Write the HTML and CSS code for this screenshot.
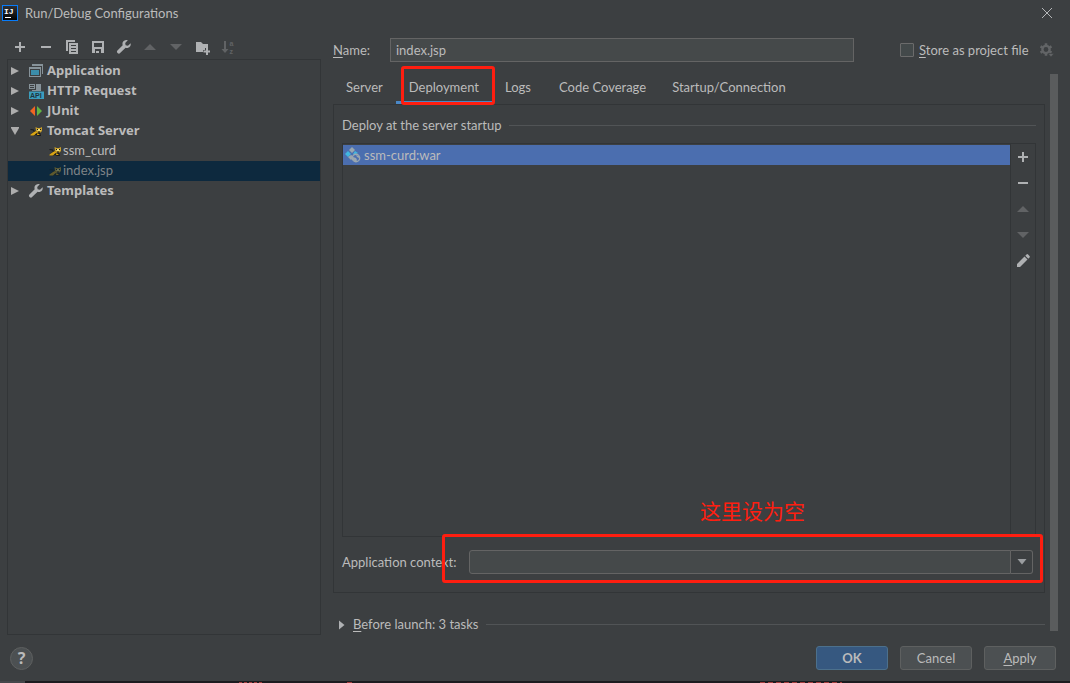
FILE: index.html
```html
<!DOCTYPE html>
<html lang="en">
<head>
<meta charset="utf-8">
<title>Run/Debug Configurations</title>
<link rel="stylesheet" href="styles.css">
</head>
<body>
<div class="dialog">
  <header class="titlebar">
    <svg class="app-logo" width="16" height="16" viewBox="0 0 16 16"><defs><linearGradient id="lg" x2="0" y2="1"><stop offset="0" stop-color="#303236"/><stop offset="1" stop-color="#000"/></linearGradient></defs><rect x=".5" y=".5" width="15" height="15" fill="url(#lg)" stroke="#087cfa"/><text x="2" y="9" class="logo-text">IJ</text><path d="M3 12.500h6" stroke="#fff"/></svg>
    <h1 class="title">Run/Debug Configurations</h1>
    <button class="icon-btn close" aria-label="Close"><svg width="16" height="16" viewBox="0 0 16 16"><path d="M3 3l10 10M13 3L3 13" stroke="#b4b6b8" fill="none"/></svg></button>
  </header>

  <main class="main">
    <section class="sidebar">
      <div class="toolbar">
        <button class="icon-btn" aria-label="Add"><svg width="16" height="16" viewBox="0 0 16 16"><path d="M7 3h2v4h4v2H9v4H7V9H3V7h4z"/></svg></button>
        <button class="icon-btn" aria-label="Remove"><svg width="16" height="16" viewBox="0 0 16 16"><path d="M3 7h10v2H3z"/></svg></button>
        <button class="icon-btn" aria-label="Copy"><svg width="16" height="16" viewBox="0 0 16 16"><path d="M2 1h9v2H4v9H2z"/><path fill-rule="evenodd" d="M5 4h9v11H5zM7 6v1h5V6zM7 9v1h5V9zM7 12v1h5v-1z"/></svg></button>
        <button class="icon-btn" aria-label="Save"><svg width="16" height="16" viewBox="0 0 16 16"><path fill-rule="evenodd" d="M2 2h12v12H2zM4 4v4h8V4zM5 10v4h1v-2h3v2h2v-4z"/></svg></button>
        <button class="icon-btn" aria-label="Edit templates"><svg width="16" height="16" viewBox="0 0 16 16"><path d="M14.600 4.200L12 6.700 9.600 6.300 9.200 4 11.800 1.300C9.600.6 7.300 1.700 6.600 3.600c-.3 1-.2 1.800.1 2.600L1.200 11.800c-.8.8.1 2.200 1 2.700.6.3 1.400.1 1.900-.4l5.500-5.400c2.900 1 5.800-1.400 5-4.500z"/></svg></button>
        <button class="icon-btn dim" aria-label="Move up" disabled><svg width="16" height="16" viewBox="0 0 16 16"><path d="M8 5l6 6H2z"/></svg></button>
        <button class="icon-btn dim" aria-label="Move down" disabled><svg width="16" height="16" viewBox="0 0 16 16"><path d="M2 5h12l-6 6z"/></svg></button>
        <button class="icon-btn" aria-label="New folder"><svg width="16" height="16" viewBox="0 0 16 16"><path d="M2 3h5l2 2h5v4h-3v2H9v2H2z"/><path d="M12 9h2v2.500h2v2h-2V16h-2v-2.500H9.500v-2H12z"/></svg></button>
        <button class="icon-btn dim" aria-label="Sort" disabled><svg width="16" height="16" viewBox="0 0 16 16"><path d="M4 2h2v8h2.500L5 14 1.500 10H4z"/><text x="9.500" y="7" class="sort-text">a</text><text x="9.500" y="14.500" class="sort-text">z</text></svg></button>
      </div>
      <ul class="tree">
        <li class="row group"><svg class="arrow" width="8" height="10" viewBox="0 0 8 10"><path d="M0 1l8 4-8 4z"/></svg><svg width="16" height="16" viewBox="0 0 16 16"><path d="M4 1h11v10h-1V3H4z" fill="#87939a"/><path fill-rule="evenodd" d="M1 4h12v10H1zM2 6v7h10V6z" fill="#87939a"/><path d="M3 7h8v5H3z" fill="#3b8daa"/></svg><span>Application</span></li>
        <li class="row group"><svg class="arrow" width="8" height="10" viewBox="0 0 8 10"><path d="M0 1l8 4-8 4z"/></svg><svg width="16" height="16" viewBox="0 0 16 16"><path fill="#87939a" fill-rule="evenodd" d="M1 1h6v5H1zM2 2v1h4V2zM2 4v1h4V4zM8 1h5v6H8zM4 7h9v1H4z"/><path fill="#3b9dbd" d="M1 8.500h15V16H1z"/><text x="2" y="15" class="api-text">API</text></svg><span>HTTP Request</span></li>
        <li class="row group"><svg class="arrow" width="8" height="10" viewBox="0 0 8 10"><path d="M0 1l8 4-8 4z"/></svg><svg width="16" height="16" viewBox="0 0 16 16"><path d="M7 3v10L2 8z" fill="#f26522"/><path d="M9 3v10l5-5z" fill="#62b543"/></svg><span>JUnit</span></li>
        <li class="row group"><svg class="arrow" width="8" height="10" viewBox="0 0 8 10"><path d="M-.5 1h9L4 9z"/></svg><svg width="16" height="16" viewBox="0 0 16 16"><use href="#tomcat"/></svg><span>Tomcat Server</span></li>
        <li class="row child"><svg width="16" height="16" viewBox="0 0 16 16"><g id="tomcat"><path d="M2.500 6.500l3 .5 1 2L3 12" stroke="#191a1b" stroke-width="1.200" fill="none"/><path d="M4 11l3-3 5 1 1 4h-3l-2-1-3 1z" fill="#191a1b"/><path d="M2.500 11.500L6 9l2-1 2 1.500-2 1-2 2H2.500z" fill="#d9a514"/><path d="M9.500 10l2.500 2h-3z" fill="#d9a514"/><path d="M7.500 4l2 1h2.500l2-1v4l-1.500 1.500h-3L8 8z" fill="#caa02a"/><path d="M9.500 6h3v2h-3z" fill="#f2df79"/><path d="M9 6h1v1H9zM12 6h1v1h-1zM10 8.500h2v1h-2z" fill="#191a1b"/></g></svg><span>ssm_curd</span></li>
        <li class="row child selected"><svg class="faded" width="16" height="16" viewBox="0 0 16 16"><use href="#tomcat"/></svg><span>index.jsp</span></li>
        <li class="row group"><svg class="arrow" width="8" height="10" viewBox="0 0 8 10"><path d="M0 1l8 4-8 4z"/></svg><svg width="16" height="16" viewBox="0 0 16 16"><path fill="#afb1b3" d="M14.600 4.200L12 6.700 9.600 6.300 9.200 4 11.800 1.300C9.600.6 7.300 1.700 6.600 3.600c-.3 1-.2 1.800.1 2.600L1.200 11.800c-.8.8.1 2.200 1 2.700.6.3 1.400.1 1.900-.4l5.500-5.400c2.900 1 5.800-1.400 5-4.500z"/></svg><span>Templates</span></li>
      </ul>
    </section>

    <section class="editor">
      <div class="name-row">
        <label class="name-label" for="name"><u>N</u>ame:</label>
        <input class="field name-input" id="name" type="text" value="index.jsp">
        <input class="check" id="store" type="checkbox">
        <label class="store-label" for="store"><u>S</u>tore as project file</label>
        <button class="icon-btn gear" aria-label="Storage options"><svg width="16" height="16" viewBox="0 0 16 16"><circle cx="7" cy="7.500" r="3.600" fill="none" stroke="#626466" stroke-width="2.400"/><path d="M7 1.200v2M7 11.800v2M1.500 4.300l1.800 1M10.700 9.700l1.800 1M1.500 10.700l1.800-1M10.700 5.300l1.800-1" stroke="#626466" stroke-width="2.600"/><path d="M9 11.500h6L12 15z" fill="#626466" stroke="#3c3f41" stroke-width=".6"/></svg></button>
      </div>
      <div class="scroll-area">
        <div class="content">
          <nav class="tabs" role="tablist">
            <button class="tab" role="tab">Server</button>
            <button class="tab active" role="tab" aria-selected="true">Deployment<i class="mark tab-mark"></i></button>
            <button class="tab" role="tab">Logs</button>
            <button class="tab" role="tab">Code Coverage</button>
            <button class="tab" role="tab">Startup/Connection</button>
          </nav>
          <div class="panel">
            <h2 class="section-head"><span>Deploy at the server startup</span></h2>
            <div class="artifacts">
              <ul class="artifact-list">
                <li class="artifact"><svg width="16" height="16" viewBox="0 0 16 16"><path d="M7 0l3 3-3 3-3-3z" fill="#9aa7b0"/><path d="M3 4l3 3-3 3-3-3z" fill="#40b6e0"/><path d="M10 4l3 2-2 1-2 1-1-1z" fill="#40b6e0"/><path d="M6 8l2 1-1 3-1 1-3-3z" fill="#9aa7b0"/><circle cx="11" cy="11" r="3.700" fill="#4b6eaf" stroke="#9aa7b0" stroke-width="1.400"/><path d="M8 10l3 1 1 2-1 2-3-2zM11 8l3 1v2l-2-1z" fill="#9aa7b0"/></svg><span>ssm-curd:war</span></li>
              </ul>
              <div class="side-tools">
                <button class="icon-btn" aria-label="Add artifact"><svg width="16" height="16" viewBox="0 0 16 16"><path d="M7 3h2v4h4v2H9v4H7V9H3V7h4z"/></svg></button>
                <button class="icon-btn" aria-label="Remove artifact"><svg width="16" height="16" viewBox="0 0 16 16"><path d="M3 7h10v2H3z"/></svg></button>
                <button class="icon-btn dim" aria-label="Artifact up" disabled><svg width="16" height="16" viewBox="0 0 16 16"><path d="M8 5l6 6H2z"/></svg></button>
                <button class="icon-btn dim" aria-label="Artifact down" disabled><svg width="16" height="16" viewBox="0 0 16 16"><path d="M2 5h12l-6 6z"/></svg></button>
                <button class="icon-btn" aria-label="Edit artifact"><svg width="16" height="16" viewBox="0 0 16 16"><path d="M2 11l7.500-7.500 3 3L5 14H2zM10.300 2.700l1.200-1.200q.8-.8 1.600 0l1.400 1.400q.8.8 0 1.600l-1.200 1.200z"/></svg></button>
              </div>
            </div>
            <div class="context-row">
              <label for="context">Application context:</label>
              <div class="combo">
                <input class="field combo-input" id="context" type="text">
                <button class="combo-btn" aria-label="Show contexts"><svg width="10" height="6" viewBox="0 0 10 6"><path d="M.5 0h9L5 5.500z" fill="#9a9da0"/></svg></button>
              </div>
              <i class="mark context-mark"></i>
              <span class="note" lang="zh-CN">这里设为空</span>
            </div>
          </div>
          <div class="before section-head"><svg width="6" height="10" viewBox="0 0 6 10"><path d="M0 .5L5.500 5 0 9.500z" fill="#afb1b3"/></svg><span><u>B</u>efore launch: 3 tasks</span></div>
        </div>
        <div class="scrollbar"></div>
      </div>
    </section>
  </main>

  <footer class="footer">
    <button class="help" aria-label="Help">?</button>
    <button class="btn primary">OK</button>
    <button class="btn">Cancel</button>
    <button class="btn"><span><u>A</u>pply</span></button>
  </footer>
</div>
<div class="backdrop"></div>
</body>
</html>
```
FILE: styles.css
```css
* { box-sizing: border-box; }
body {
  margin: 0;
  min-height: 100vh;
  display: flex;
  flex-direction: column;
  background: #3c3f41;
  color: #bbbbbb;
  font: 13px/20px Lato, "Noto Sans CJK SC", sans-serif;
}
button, input { font: inherit; color: inherit; margin: 0; }
ul { list-style: none; margin: 0; padding: 0; }
svg { display: block; flex: none; }
u { text-underline-offset: 2px; }

.dialog { flex: 1; display: flex; flex-direction: column; }
.titlebar { display: flex; align-items: center; height: 28px; padding: 0 15px 2px 2px; }
.title { flex: 1; margin: 0 0 0 7px; font-size: 13px; font-weight: 400; }
.logo-text { font: bold 8px "Liberation Mono", monospace; fill: #fff; }
.icon-btn {
  display: flex;
  align-items: center;
  justify-content: center;
  padding: 0;
  border: 0;
  background: none;
  fill: #afb1b3;
}
.dim { fill: #616365; }

.main { flex: 1; display: flex; gap: 12px; padding-left: 7px; }
.sidebar { width: 314px; flex: none; display: flex; flex-direction: column; padding-top: 7px; }
.toolbar { display: flex; height: 24px; }
.toolbar .icon-btn { width: 26px; }
.sort-text { font: bold 7px "Liberation Sans", sans-serif; }
.tree { flex: 1; padding-top: 1px; border: 1px solid #323537; }
.row { display: flex; align-items: center; height: 20px; gap: 3px; }
.group { padding-left: 3px; font-family: "Noto Sans", sans-serif; font-weight: 700; }
.child { padding-left: 39px; gap: 0; }
.arrow { fill: #adadad; margin-right: 6px; }
.row span { padding-bottom: 2px; }
.selected { background: #0d293e; color: #7f8487; }
.faded { opacity: .4; }
.api-text { font: bold 7px "Liberation Sans", sans-serif; fill: #1f3540; }

.editor { flex: 1; min-width: 0; display: flex; flex-direction: column; padding-top: 10px; }
.name-row { display: flex; align-items: center; padding-right: 15px; }
.name-label { width: 57px; padding-bottom: 1px; }
.field { height: 24px; min-width: 0; padding: 0 5px 1px; border: 1px solid #646464; background: #45494a; outline: 0; }
.name-input { flex: 1; margin-right: 46px; }
.check { appearance: none; width: 14px; height: 14px; border: 1px solid #6b6b6b; border-radius: 1px; background: #43494a; }
.store-label { min-width: 115px; margin: 0 5px; }
.scroll-area { flex: 1; display: flex; gap: 5px; margin-top: 12px; padding-right: 12px; }
.content { flex: 1; min-width: 0; display: flex; flex-direction: column; }
.scrollbar { width: 8px; margin-bottom: 4px; background: #5a5c5d; }
.tabs { display: flex; height: 30px; }
.tab { position: relative; min-width: 54px; padding: 0 13px 4px; border: 0; background: none; text-align: left; white-space: nowrap; }
.tab:first-child { min-width: 0; }
.active { box-shadow: inset 0 -3px #4a88c7; }
.mark { position: absolute; border: 3px solid #ff1e10; border-radius: 3px; pointer-events: none; }
.tab-mark { inset: -8px -3px -1px 5px; }

.panel { flex: 1; display: flex; flex-direction: column; padding: 10px 8px 18px; border: 1px solid #323537; }
.section-head { display: flex; align-items: center; gap: 8px; margin: 0; font-size: 13px; font-weight: 400; }
.section-head::after { content: ""; flex: 1; height: 1px; background: #515456; }
.artifacts { flex: 1; display: flex; margin: 8px 0 13px; border: 1px solid #323537; }
.artifact-list { flex: 1; padding-top: 1px; }
.artifact { display: flex; align-items: center; gap: 3px; height: 20px; padding-left: 2px; background: #4b6eaf; }
.side-tools { width: 25px; border-left: 1px solid #323537; }
.side-tools .icon-btn { width: 24px; height: 26px; }
.context-row { position: relative; display: flex; align-items: center; gap: 12px; padding-right: 3px; }
.combo { flex: 1; display: flex; }
.combo-input { flex: 1; border-radius: 3px 0 0 3px; }
.combo-btn { display: flex; align-items: center; justify-content: center; width: 22px; padding: 0; border: 1px solid #646464; border-left: 0; border-radius: 0 3px 3px 0; background: #3c3f41; }
.context-mark { inset: -16px -7px -9px 100px; }
.note { position: absolute; right: 231px; bottom: 49px; color: #ff1e10; font: 21px/30px "Noto Sans CJK SC", sans-serif; }
.before { margin-top: 21px; padding-left: 6px; }
.before span { padding-bottom: 1px; }

.footer { display: flex; align-items: center; gap: 12px; padding: 11px 14px 11px 10px; }
.help { width: 23px; height: 23px; margin-right: auto; padding: 0; border: 1px solid #5e6060; border-radius: 50%; background: #4c5052; font: bold 16px/20px "Noto Sans", sans-serif; }
.btn { width: 72px; height: 24px; padding: 0; border: 1px solid #5e6060; border-radius: 3px; background: #4c5052; }
.primary { border-color: #4c708c; background: #365880; font-weight: 700; }
.backdrop {
  height: 2px;
  background:
    linear-gradient(#45474b, #45474b) 0 0 / 25px 2px no-repeat,
    repeating-linear-gradient(90deg, #a33c3c 0 3px, transparent 3px 5px) 239px 1px / 23px 1px no-repeat,
    repeating-linear-gradient(90deg, #a33c3c 0 5px, transparent 5px 8px) 760px 1px / 82px 1px no-repeat,
    linear-gradient(#a33c3c, #a33c3c) 347px 1px / 5px 1px no-repeat,
    #1c1b1f;
}
```
